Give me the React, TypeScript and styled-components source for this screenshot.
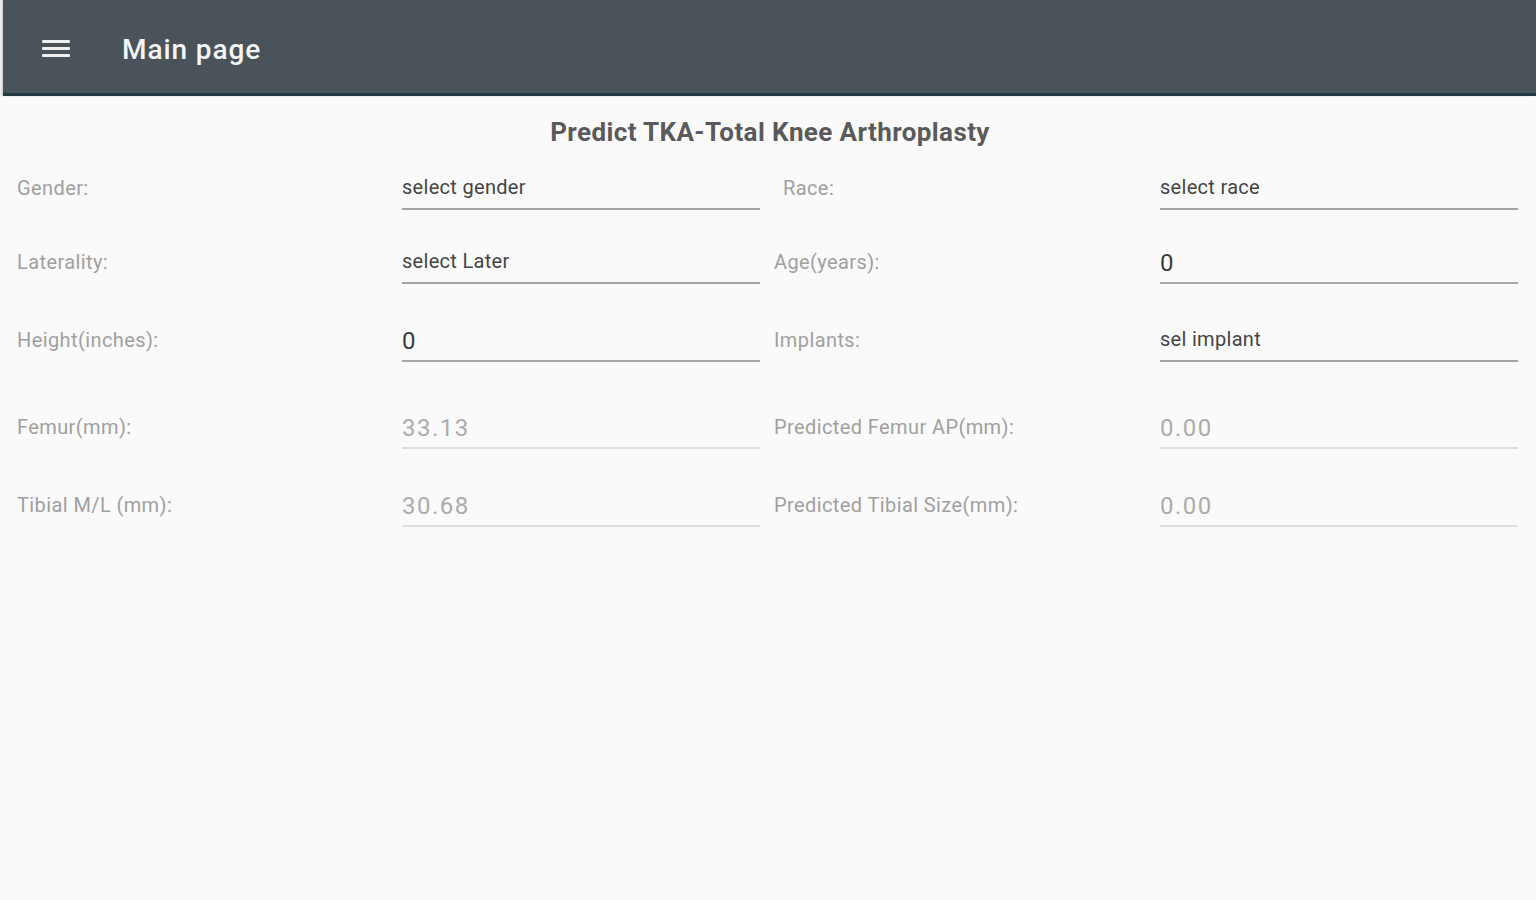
import React from 'react'
import styled, { createGlobalStyle } from 'styled-components'

const GlobalStyle = createGlobalStyle`
    html, body {
        margin:0;
        padding:0;
        background:#fafafa;
        font-family:Roboto, "Noto Sans", sans-serif;
    }
`

type Kind = 'select' | 'input' | 'disabled'

type Item = {
    label: string
    value: string
    kind: Kind
    indent?: number
}

const rows: { space: number, left: Item, right: Item }[] = [
    {
        space: 0,
        left: { label: 'Gender:', value: 'select gender', kind: 'select' },
        right: { label: 'Race:', value: 'select race', kind: 'select', indent: 9 },
    },
    {
        space: 30,
        left: { label: 'Laterality:', value: 'select Later', kind: 'select' },
        right: { label: 'Age(years):', value: '0', kind: 'input' },
    },
    {
        space: 34,
        left: { label: 'Height(inches):', value: '0', kind: 'input' },
        right: { label: 'Implants:', value: 'sel implant', kind: 'select' },
    },
    {
        space: 43,
        left: { label: 'Femur(mm):', value: '33.13', kind: 'disabled' },
        right: { label: 'Predicted Femur AP(mm):', value: '0.00', kind: 'disabled' },
    },
    {
        space: 34,
        left: { label: 'Tibial M/L (mm):', value: '30.68', kind: 'disabled' },
        right: { label: 'Predicted Tibial Size(mm):', value: '0.00', kind: 'disabled' },
    },
]

const MenuIcon = () => (
    <svg width="28" height="18" viewBox="0 0 28 18">
        <rect x="0" y="0" width="28" height="3" rx="1" fill="#eef0f1" />
        <rect x="0" y="7" width="28" height="3" rx="1" fill="#eef0f1" />
        <rect x="0" y="14" width="28" height="3" rx="1" fill="#eef0f1" />
    </svg>
)

const App = () => {
    return (
        <Page>
            <GlobalStyle />
            <Toolbar>
                <MenuButton><MenuIcon /></MenuButton>
                <ToolbarTitle>Main page</ToolbarTitle>
            </Toolbar>
            <Title>Predict TKA-Total Knee Arthroplasty</Title>
            <Form>
                {rows.map((row, i) => (
                    <Row key={i} $space={row.space}>
                        {[row.left, row.right].map((item, j) => (
                            <React.Fragment key={j}>
                                <Label $indent={item.indent ?? 0}>{item.label}</Label>
                                <Field $kind={item.kind}>{item.value}</Field>
                            </React.Fragment>
                        ))}
                    </Row>
                ))}
            </Form>
        </Page>
    )
}

export default App

const Page = styled.div`
    min-height:900px;
    background:#fafafa;
`

const Toolbar = styled.header`
    margin-left:3px;
    height:93px;
    background:#4b535a;
    border-bottom:3px solid #213a42;
    display:flex;
    align-items:center;
    box-shadow:-2px 0 2px rgba(0,0,0,0.15);
`

const MenuButton = styled.div`
    width:28px;
    height:18px;
    margin-left:39px;
    margin-top:4px;
    display:flex;
`

const ToolbarTitle = styled.h1`
    margin:6px 0 0 52px;
    font-size:28px;
    font-weight:500;
    color:#f4f5f6;
    letter-spacing:0.9px;
`

const Title = styled.h2`
    margin:0;
    padding-top:21px;
    height:37px;
    text-align:center;
    font-size:26px;
    font-weight:700;
    color:#5a5a5a;
    padding-left:4px;
    letter-spacing:0.4px;
`

const Form = styled.div`
    padding:12px 18px 0 17px;
`

const Row = styled.div<{ $space: number }>`
    display:grid;
    grid-template-columns:385px 358px 14px 386px 358px;
    align-items:center;
    height:44px;
    margin-top:${p => p.$space}px;
    & > :nth-child(3){
        grid-column:4;
    }
`

const Label = styled.div<{ $indent: number }>`
    font-size:20px;
    color:#a0a0a0;
    padding-left:${p => p.$indent}px;
    letter-spacing:0.4px;
`

const Field = styled.div<{ $kind: Kind }>`
    display:flex;
    align-items:center;
    border-bottom:2px solid ${p => p.$kind === 'disabled' ? '#dedede' : p.$kind === 'input' ? '#a8a8a8' : '#a4a4a4'};
    font-size:${p => p.$kind === 'select' ? '20px' : '24px'};
    color:${p => p.$kind === 'disabled' ? '#acacac' : p.$kind === 'input' ? '#3a3a3a' : '#454545'};
    letter-spacing:${p => p.$kind === 'select' ? '0.3px' : '1.5px'};
    padding-top:${p => p.$kind === 'select' ? '0' : '3px'};
    box-sizing:border-box;
    height:44px;
`
